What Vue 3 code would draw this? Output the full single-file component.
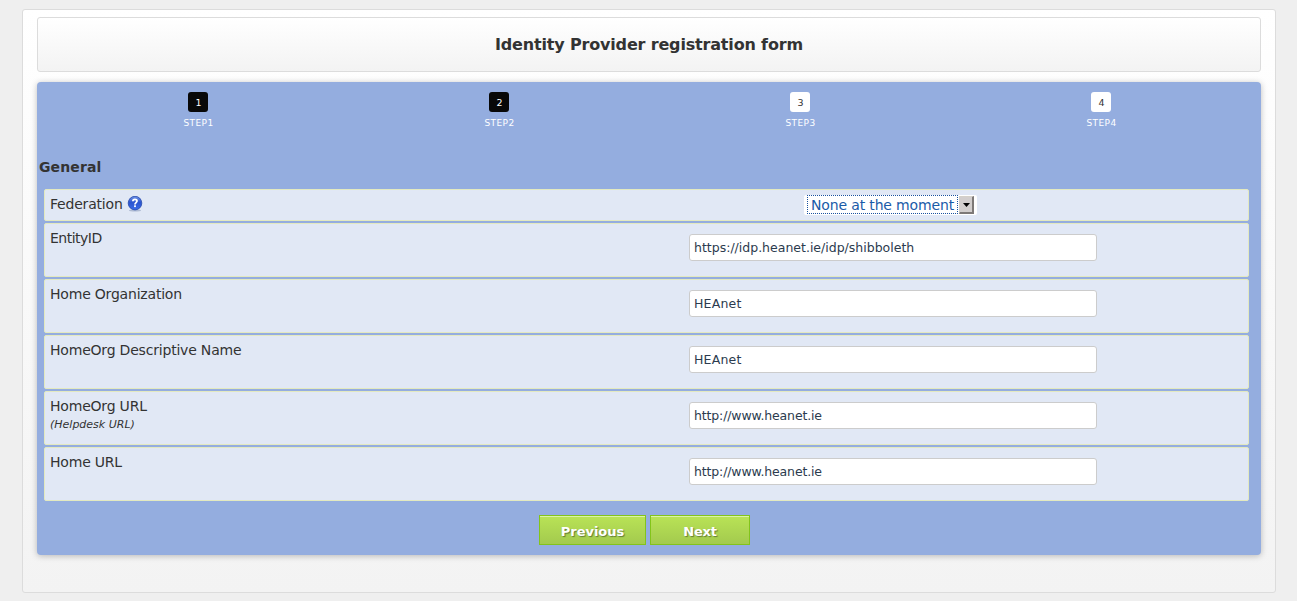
<script setup>
import { ref } from 'vue'

const steps = [
  { n: 1, done: true },
  { n: 2, done: true },
  { n: 3, done: false },
  { n: 4, done: false },
]
const fields = ref([
  { label: 'EntityID', value: 'https://idp.heanet.ie/idp/shibboleth', tone: 'entity' },
  { label: 'Home Organization', value: 'HEAnet', tone: 'org' },
  { label: 'HomeOrg Descriptive Name', value: 'HEAnet', tone: 'org' },
  { label: 'HomeOrg URL', hint: '(Helpdesk URL)', value: 'http://www.heanet.ie', tone: 'url' },
  { label: 'Home URL', value: 'http://www.heanet.ie', tone: 'url' },
])
</script>

<template>
  <main class="page">
    <h1 class="title">Identity Provider registration form</h1>
    <form class="panel" @submit.prevent>
      <ul class="steps">
        <li v-for="s in steps" :key="s.n">
          <span class="num" :class="{ done: s.done }">{{ s.n }}</span>
          <span class="name">STEP{{ s.n }}</span>
        </li>
      </ul>
      <h2 class="section">General</h2>
      <div class="rows">
        <div class="row first">
          <div class="label">
            <span>Federation</span>
            <svg class="help" width="16" height="16" viewBox="0 0 16 16">
              <defs>
                <linearGradient id="ball" x1="0" y1="0" x2="0" y2="1">
                  <stop offset="0" stop-color="#6f93e6" />
                  <stop offset=".45" stop-color="#2b54cf" />
                  <stop offset="1" stop-color="#3a6be8" />
                </linearGradient>
              </defs>
              <ellipse cx="8" cy="14.5" rx="6" ry="1" fill="#8e9dbd" opacity=".6" />
              <circle cx="8" cy="7.1" r="6.8" fill="url(#ball)" stroke="#2649ab" stroke-width=".8" />
              <path d="M5.9 5.3C5.9 2.8 10 2.9 10 5.1C10 6.6 8 6.6 8 8.4" fill="none" stroke="#fff" stroke-width="1.8" />
              <rect x="7.1" y="9.3" width="1.8" height="1.8" fill="#fff" />
            </svg>
          </div>
          <div class="select">
            <span class="choice">None at the moment</span>
            <span class="arrow"><svg width="7" height="4" viewBox="0 0 7 4"><path d="M0 0H7L3.5 4Z" /></svg></span>
          </div>
        </div>
        <div v-for="f in fields" :key="f.label" class="row" :class="f.tone">
          <div class="label">
            <span>{{ f.label }}</span>
            <em v-if="f.hint">{{ f.hint }}</em>
          </div>
          <input v-model="f.value" class="field" type="text" spellcheck="false" />
        </div>
      </div>
      <div class="actions">
        <button class="prev" type="button">Previous</button>
        <button class="next" type="button">Next</button>
      </div>
    </form>
  </main>
</template>

<style>
html {
  background: #efefef;
}
body {
  overflow: hidden;
}
</style>

<style scoped>
.page {
  box-sizing: border-box;
  width: 1254px;
  height: 584px;
  margin: 9px 0 8px 22px;
  padding: 7px 14px 0;
  border: 1px solid #dcdcdc;
  border-radius: 3px;
  background: linear-gradient(#fff, #f3f3f3);
  font-family: "DejaVu Sans", Verdana, sans-serif;
  color: #333;
}
.title {
  box-sizing: border-box;
  height: 55px;
  margin: 0 0 10px;
  border: 1px solid #dcdcdc;
  border-radius: 3px;
  background: linear-gradient(#fff, #f3f3f3);
  font-size: 16px;
  line-height: 53px;
  letter-spacing: -.17px;
  text-align: center;
}
.panel {
  box-sizing: border-box;
  height: 473px;
  border-radius: 4px;
  background: #94addf;
  box-shadow: 0 1px 6px rgba(0, 0, 0, .25);
}
.steps {
  display: flex;
  height: 72px;
  margin: 0;
  padding: 10px 9px 0 11px;
  box-sizing: border-box;
  list-style: none;
}
.steps li {
  flex: 1;
  display: flex;
  flex-direction: column;
  align-items: center;
}
.num {
  box-sizing: border-box;
  width: 20px;
  height: 20px;
  padding-left: 1px;
  margin-right: 1px;
  border-radius: 3px;
  background: #fff;
  font-size: 9.5px;
  line-height: 21px;
  text-align: center;
}
.num.done {
  background: #080808;
  color: #fff;
}
.name {
  margin-top: 4px;
  font-size: 9px;
  line-height: 14px;
  letter-spacing: .4px;
  color: #fff;
}
.section {
  margin: 0;
  padding: 4px 0 0 2px;
  height: 31px;
  font-size: 14px;
  line-height: 18px;
  letter-spacing: .12px;
}
.rows {
  display: flex;
  flex-direction: column;
  gap: 2px;
  margin: 0 12px 0 7px;
}
.row {
  display: flex;
  box-sizing: border-box;
  height: 54px;
  border: 1px solid #e3e9c0;
  border-radius: 2px;
  background: #e1e8f5;
}
.row.first {
  height: 32px;
}
.label {
  box-sizing: border-box;
  width: 644px;
  padding: 5px 0 0 5px;
  font-size: 14px;
  line-height: 18px;
  letter-spacing: -.2px;
}
.entity .label {
  letter-spacing: -.5px;
}
.row.first .label {
  display: flex;
  width: 759px;
}
.help {
  margin: 1px 0 0 4px;
}
.label em {
  display: block;
  font-size: 11px;
  line-height: 19px;
  letter-spacing: 0;
}
.field {
  box-sizing: border-box;
  width: 408px;
  height: 27px;
  margin: 10px 0 0;
  padding: 0 4px;
  border: 1px solid #ccc;
  border-radius: 3px;
  background: #fff;
  font: 12.5px "DejaVu Sans", Verdana, sans-serif;
  color: #2b3b4e;
  outline: none;
}
.org .field {
  letter-spacing: .2px;
}
.url .field {
  letter-spacing: -.14px;
}
.select {
  display: flex;
  box-sizing: border-box;
  width: 173px;
  height: 20px;
  margin-top: 5px;
  padding: 0 3px;
  border-radius: 2px;
  background: #fff;
}
.choice {
  box-sizing: border-box;
  width: 151px;
  height: 19px;
  padding-left: 3px;
  border: 1px dotted #1a52a0;
  font-size: 14px;
  line-height: 18px;
  letter-spacing: -.15px;
  white-space: nowrap;
  color: #1a5ba8;
}
.arrow {
  display: flex;
  align-items: center;
  justify-content: center;
  box-sizing: border-box;
  width: 15px;
  height: 18px;
  margin: 1px 0 0 1px;
  border: 1px solid;
  border-width: 1px 2px 2px 1px;
  border-color: #d4d0c8 #7d7977 #7d7977 #d4d0c8;
  background: #d2cecd;
}
.actions {
  display: flex;
  gap: 4px;
  padding: 14px 0 0 502px;
}
.actions button {
  box-sizing: border-box;
  height: 30px;
  padding: 2px 0 0;
  border: 1px solid #83c41a;
  background: linear-gradient(#b9e356, #a3ca4e);
  box-shadow: inset 0 1px 0 #dcf2a8;
  font: bold 13px "DejaVu Sans", Verdana, sans-serif;
  color: #fff;
  text-shadow: 1px 1px 1px rgba(70, 90, 40, .7);
}
.actions .prev {
  width: 107px;
}
.actions .next {
  width: 100px;
  letter-spacing: -.2px;
}
</style>
